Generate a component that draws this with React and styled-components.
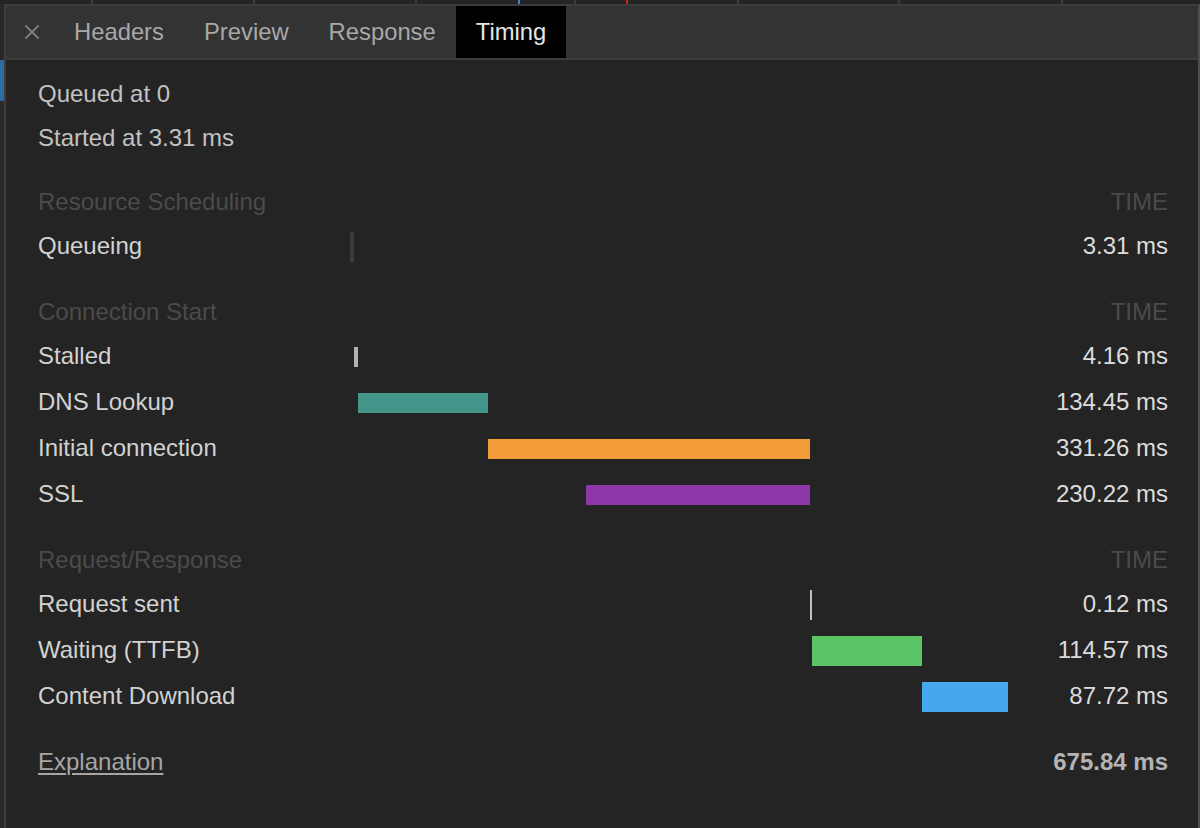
import React from "react";
import styled, { createGlobalStyle } from "styled-components";

const Global = createGlobalStyle`
  html, body { margin: 0; padding: 0; background: #242424; }
  body { font-family: "Liberation Sans", Arial, sans-serif; }
  #root { width: 1200px; height: 828px; overflow: hidden; }
`;

const Page = styled.div`
  width: 1200px;
  height: 828px;
  display: flex;
  flex-direction: column;
  background: #242424;
  font-family: "Liberation Sans", Arial, sans-serif;
`;

const Overview = styled.svg`
  display: block;
  flex: 0 0 4px;
`;

const Body = styled.div`
  flex: 1;
  display: flex;
  min-height: 0;
`;

const Gutter = styled.div`
  width: 4px;
  display: flex;
  flex-direction: column;
  background: #282828;
`;

const GutterGap = styled.div`
  height: 56px;
`;

const GutterMarker = styled.div`
  height: 41px;
  background: #2d6aa6;
`;

const Panel = styled.div`
  flex: 1;
  display: flex;
  flex-direction: column;
  border-left: 2px solid #3d3d3d;
  border-right: 2px solid #4e4e4e;
  border-top: 2px solid #3c3c3c;
  background: #242424;
`;

const TabBar = styled.div`
  height: 52px;
  display: flex;
  align-items: stretch;
  background: #333333;
  border-bottom: 2px solid #3d3d3d;
  padding-left: 4px;
`;

const CloseButton = styled.div`
  width: 44px;
  display: flex;
  align-items: center;
  justify-content: center;
`;

const Tab = styled.div`
  display: flex;
  align-items: center;
  padding: 0 20px;
  font-size: 23.8px;
  color: ${(p) => (p.$active ? "#e6e6e6" : "#a8a8a8")};
  background: ${(p) => (p.$active ? "#000000" : "transparent")};
`;

const Content = styled.div`
  flex: 1;
  padding: 12px 30px 0 32px;
`;

const InfoBlock = styled.div`
  margin-bottom: 21px;
`;

const InfoRow = styled.div`
  height: 44px;
  display: flex;
  align-items: center;
  font-size: 24px;
  color: #c2c2c2;
`;

const Section = styled.div`
  & + & {
    margin-top: 22px;
  }
`;

const Row = styled.div`
  height: ${(p) => (p.$header ? "42px" : "46px")};
  display: grid;
  grid-template-columns: 312px 658px 1fr;
  align-items: center;
  font-size: 24px;
`;

const HeaderText = styled.div`
  color: #4b4b4b;
`;

const HeaderTime = styled.div`
  color: #4b4b4b;
  text-align: right;
`;

const Label = styled.div`
  color: #d2d2d2;
`;

const Time = styled.div`
  color: #dcdcdc;
  text-align: right;
`;

const Track = styled.div`
  height: 100%;
  display: flex;
  align-items: center;
  padding-top: 2px;
  box-sizing: border-box;
`;

const Bar = styled.div`
  flex: 0 0 auto;
  height: ${(p) => p.$h}px;
  background: ${(p) => p.$color};
`;

const Footer = styled.div`
  margin-top: 22px;
  height: 42px;
  display: flex;
  align-items: center;
  justify-content: space-between;
  font-size: 24px;
`;

const ExplanationLink = styled.a`
  color: #a6a6a6;
  text-decoration: underline;
  text-underline-offset: 3px;
  text-decoration-thickness: 2px;
  cursor: pointer;
`;

const Total = styled.div`
  color: #b4b4b4;
  font-weight: bold;
`;

const sections = [
  {
    title: "Resource Scheduling",
    rows: [{ label: "Queueing", time: "3.31 ms", left: 0, width: 4, h: 30, color: "#3a3a3a" }],
  },
  {
    title: "Connection Start",
    rows: [
      { label: "Stalled", time: "4.16 ms", left: 4, width: 4, h: 20, color: "#b3b3b3" },
      { label: "DNS Lookup", time: "134.45 ms", left: 8, width: 130, h: 20, color: "#43958a" },
      { label: "Initial connection", time: "331.26 ms", left: 138, width: 322, h: 20, color: "#f29c38" },
      { label: "SSL", time: "230.22 ms", left: 236, width: 224, h: 20, color: "#8e37a8" },
    ],
  },
  {
    title: "Request/Response",
    rows: [
      { label: "Request sent", time: "0.12 ms", left: 460, width: 2, h: 30, color: "#b9bec6" },
      { label: "Waiting (TTFB)", time: "114.57 ms", left: 462, width: 110, h: 30, color: "#5bc465" },
      { label: "Content Download", time: "87.72 ms", left: 572, width: 86, h: 30, color: "#45a7ec" },
    ],
  },
];

const dividers = [91, 253, 415, 574, 737, 898, 1061];

export default function App() {
  return (
    <Page>
      <Global />
      <Overview width="1200" height="4" viewBox="0 0 1200 4">
        <rect x="0" y="0" width="1200" height="4" fill="#242424" />
        {dividers.map((x) => (
          <rect key={x} x={x} y="0" width="2" height="4" fill="#3b3b3b" />
        ))}
        <rect x="518" y="0" width="2" height="4" fill="#3b7fd6" />
        <rect x="626" y="0" width="2" height="4" fill="#c9261d" />
      </Overview>
      <Body>
        <Gutter>
          <GutterGap />
          <GutterMarker />
        </Gutter>
        <Panel>
          <TabBar>
            <CloseButton>
              <svg width="16" height="16" viewBox="0 0 16 16">
                <path d="M2 2 L14 14 M14 2 L2 14" stroke="#7f7f7f" strokeWidth="1.8" strokeLinecap="round" />
              </svg>
            </CloseButton>
            <Tab>Headers</Tab>
            <Tab>Preview</Tab>
            <Tab>Response</Tab>
            <Tab $active>Timing</Tab>
          </TabBar>
          <Content>
            <InfoBlock>
              <InfoRow>Queued at 0</InfoRow>
              <InfoRow>Started at 3.31 ms</InfoRow>
            </InfoBlock>
            {sections.map((s) => (
              <Section key={s.title}>
                <Row $header>
                  <HeaderText>{s.title}</HeaderText>
                  <div />
                  <HeaderTime>TIME</HeaderTime>
                </Row>
                {s.rows.map((r) => (
                  <Row key={r.label}>
                    <Label>{r.label}</Label>
                    <Track>
                      <Bar $h={r.h} $color={r.color} style={{ marginLeft: r.left, width: r.width }} />
                    </Track>
                    <Time>{r.time}</Time>
                  </Row>
                ))}
              </Section>
            ))}
            <Footer>
              <ExplanationLink>Explanation</ExplanationLink>
              <Total>675.84 ms</Total>
            </Footer>
          </Content>
        </Panel>
      </Body>
    </Page>
  );
}
